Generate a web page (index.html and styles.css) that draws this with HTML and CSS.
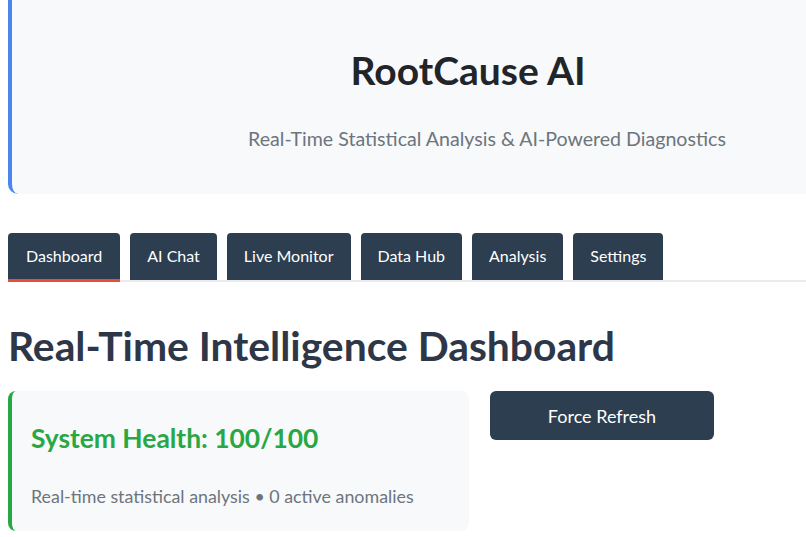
FILE: index.html
```html
<!DOCTYPE html>
<html lang="en">
<head>
<meta charset="utf-8">
<title>RootCause AI</title>
<link rel="stylesheet" href="styles.css">
</head>
<body>
<header class="hero">
  <h1 class="hero-title">RootCause AI</h1>
  <p class="hero-sub">Real-Time Statistical Analysis &amp; AI-Powered Diagnostics</p>
</header>
<nav class="tabs">
  <button class="tab active">Dashboard</button>
  <button class="tab">AI Chat</button>
  <button class="tab">Live Monitor</button>
  <button class="tab">Data Hub</button>
  <button class="tab">Analysis</button>
  <button class="tab">Settings</button>
</nav>
<main>
  <h2 class="page-title">Real-Time Intelligence Dashboard</h2>
  <div class="row">
    <section class="health-card">
      <h3 class="health-title">System Health: 100/100</h3>
      <p class="health-sub">Real-time statistical analysis • 0 active anomalies</p>
    </section>
    <button class="refresh">Force Refresh</button>
  </div>
</main>
</body>
</html>
```

FILE: styles.css
```css
html, body {
  margin: 0;
  padding: 0;
  background: #ffffff;
  overflow: hidden;
}
body {
  padding: 0 0 0 8px;
  font-family: Lato, "Noto Sans", sans-serif;
  color: #2d3748;
}
.hero {
  width: 916px;
  height: 194px;
  box-sizing: border-box;
  background: #f8f9fa;
  border-left: 4px solid #4a86f0;
  border-radius: 0 0 0 10px;
  padding-top: 46px;
  text-align: center;
}
.hero-title {
  margin: 0;
  font-size: 39px;
  line-height: 48px;
  font-weight: 700;
  color: #212529;
}
.hero-sub {
  margin: 33px 0 0 38px;
  font-size: 19.6px;
  line-height: 24px;
  color: #6c757d;
}
.tabs {
  display: flex;
  gap: 10px;
  margin-top: 39px;
  border-bottom: 2px solid #e9ecef;
  width: 916px;
}
.tab {
  height: 47px;
  padding: 0 17px 3px;
  border: none;
  border-radius: 4px 4px 0 0;
  background: #2c3e50;
  color: #ffffff;
  font-family: inherit;
  font-size: 16px;
}
.tab.active {
  border-bottom: 3px solid #e74c3c;
  height: 49px;
  margin-bottom: -2px;
  padding: 0 18px 1px;
}
.page-title {
  margin: 40px 0 0;
  font-size: 40.8px;
  line-height: 48px;
  font-weight: 700;
  color: #2d3748;
}
.row {
  display: flex;
  align-items: flex-start;
  gap: 21px;
  margin-top: 21px;
}
.health-card {
  width: 461px;
  height: 140px;
  box-sizing: border-box;
  background: #f8f9fa;
  border-left: 4px solid #28a745;
  border-radius: 8px;
  padding: 30px 0 0 19px;
}
.health-title {
  margin: 0;
  font-size: 26.4px;
  line-height: 34px;
  font-weight: 700;
  color: #28a745;
}
.health-sub {
  margin: 30px 0 0;
  font-size: 17.85px;
  line-height: 22px;
  color: #6c757d;
}
.refresh {
  width: 224px;
  height: 49px;
  border: none;
  border-radius: 6px;
  background: #2c3e50;
  color: #ffffff;
  font-family: inherit;
  font-size: 18px;
}
```
